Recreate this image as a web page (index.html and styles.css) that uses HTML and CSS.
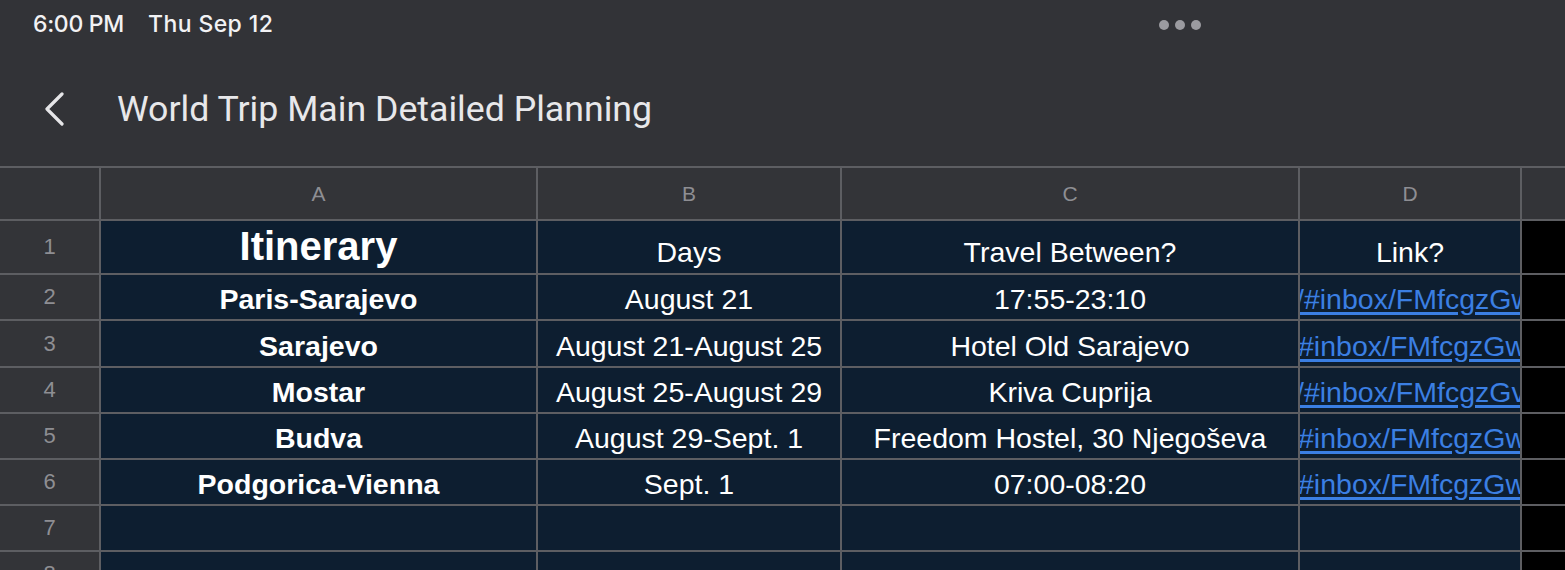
FILE: index.html
```html
<!DOCTYPE html>
<html lang="en">
<head>
<meta charset="utf-8">
<title>World Trip Main Detailed Planning</title>
<link rel="stylesheet" href="styles.css">
</head>
<body>
<div class="app">
  <header class="topbar">
    <div class="status">
      <span class="time">6:00 PM</span>
      <span class="date">Thu Sep 12</span>
      <span class="dots"><i></i><i></i><i></i></span>
    </div>
    <div class="titlebar">
      <svg class="back" width="24" height="34" viewBox="0 0 24 34" aria-hidden="true">
        <path d="M19 2 L4 17 L19 32" fill="none" stroke="#e6e6e8" stroke-width="3.2" stroke-linecap="round" stroke-linejoin="round"/>
      </svg>
      <h1 class="title">World Trip Main Detailed Planning</h1>
    </div>
  </header>

  <div class="sheet">
    <div class="hd corner"></div>
    <div class="hd col">A</div>
    <div class="hd col">B</div>
    <div class="hd col">C</div>
    <div class="hd col">D</div>
    <div class="hd col"></div>

    <div class="rn r1">1</div>
    <div class="c r1"><span class="big">Itinerary</span></div>
    <div class="c r1">Days</div>
    <div class="c r1">Travel Between?</div>
    <div class="c r1">Link?</div>
    <div class="x r1"></div>

    <div class="rn">2</div>
    <div class="c b">Paris-Sarajevo</div>
    <div class="c">August 21</div>
    <div class="c">17:55-23:10</div>
    <div class="c lk"><a class="url off3">/#inbox/FMfcgzGwHVDbwTdmHcLr</a></div>
    <div class="x"></div>

    <div class="rn">3</div>
    <div class="c b">Sarajevo</div>
    <div class="c">August 21-August 25</div>
    <div class="c">Hotel Old Sarajevo</div>
    <div class="c lk"><a class="url off1">#inbox/FMfcgzGwJSgcNmXlLBqN</a></div>
    <div class="x"></div>

    <div class="rn">4</div>
    <div class="c b">Mostar</div>
    <div class="c">August 25-August 29</div>
    <div class="c">Kriva Cuprija</div>
    <div class="c lk"><a class="url off3">/#inbox/FMfcgzGvWmBkNqRtTzpL</a></div>
    <div class="x"></div>

    <div class="rn">5</div>
    <div class="c b">Budva</div>
    <div class="c">August 29-Sept. 1</div>
    <div class="c">Freedom Hostel, 30 Njegoševa</div>
    <div class="c lk"><a class="url off1">#inbox/FMfcgzGwKXpDmbsQrWhT</a></div>
    <div class="x"></div>

    <div class="rn">6</div>
    <div class="c b">Podgorica-Vienna</div>
    <div class="c">Sept. 1</div>
    <div class="c">07:00-08:20</div>
    <div class="c lk"><a class="url off1">#inbox/FMfcgzGwLmNtPqRsVxZb</a></div>
    <div class="x"></div>

    <div class="rn">7</div>
    <div class="c"></div>
    <div class="c"></div>
    <div class="c"></div>
    <div class="c"></div>
    <div class="x"></div>

    <div class="rn">8</div>
    <div class="c"></div>
    <div class="c"></div>
    <div class="c"></div>
    <div class="c"></div>
    <div class="x"></div>
  </div>
</div>
</body>
</html>
```

FILE: styles.css
```css
* { box-sizing: border-box; }

html, body {
  margin: 0;
  padding: 0;
  background: #323337;
  overflow: hidden;
}

.app {
  width: 1565px;
  height: 570px;
  overflow: hidden;
  background: #323337;
}

.topbar {
  display: flex;
  flex-direction: column;
}

.status {
  height: 48px;
  display: flex;
  align-items: center;
  padding-left: 33px;
  color: #f2f2f4;
  font-family: Inter, "Noto Sans", sans-serif;
  font-size: 23px;
  font-weight: 500;
}

.status .time { width: 115px; letter-spacing: -0.3px; }
.status .date { width: 1011px; letter-spacing: 0.4px; }

.dots {
  display: flex;
  gap: 6px;
  margin-top: 1px;
}

.dots i {
  display: block;
  width: 10px;
  height: 10px;
  border-radius: 50%;
  background: #9b9ba0;
}

.titlebar {
  height: 118px;
  display: flex;
  align-items: center;
  padding-left: 43px;
  padding-top: 3px;
}

.back { flex: none; margin-top: 1px; }

.title {
  margin: 0 0 0 50px;
  color: #e8e8ea;
  font-family: Roboto, "Open Sans", sans-serif;
  font-weight: 400;
  font-size: 35.7px;
  letter-spacing: 0;
}

.sheet {
  display: grid;
  grid-template-columns: 99px 435px 302px 456px 220px 1fr;
  grid-template-rows: 51px 52px 44px 45px 44px 44px 44px 44px 44px;
  gap: 2px;
  padding-top: 2px;
  background: #5d5e62;
  font-family: "Liberation Sans", Arial, sans-serif;
}

.hd {
  background: #333438;
  color: #8e8e93;
  font-size: 21px;
  display: flex;
  align-items: center;
  justify-content: center;
}

.rn {
  background: #333438;
  color: #8e8e93;
  font-size: 22px;
  display: flex;
  align-items: center;
  justify-content: center;
}

.c {
  background: #0d1e30;
  color: #ffffff;
  font-size: 28.5px;
  line-height: 1.15;
  display: flex;
  align-items: flex-end;
  justify-content: center;
  padding-bottom: 3px;
  white-space: nowrap;
  overflow: hidden;
}

.c.r1 { padding-bottom: 4px; }

.b { font-weight: 700; }

.big {
  font-size: 40px;
  font-weight: 700;
  line-height: 1.15;
}

.x { background: #000000; }

.lk { justify-content: flex-start; }

.url {
  color: #3b7fe3;
  text-decoration: underline;
  text-decoration-thickness: 3px;
  text-underline-offset: 3px;
}

.off1 { margin-left: -2px; }
.off3 { margin-left: -4px; }
```
